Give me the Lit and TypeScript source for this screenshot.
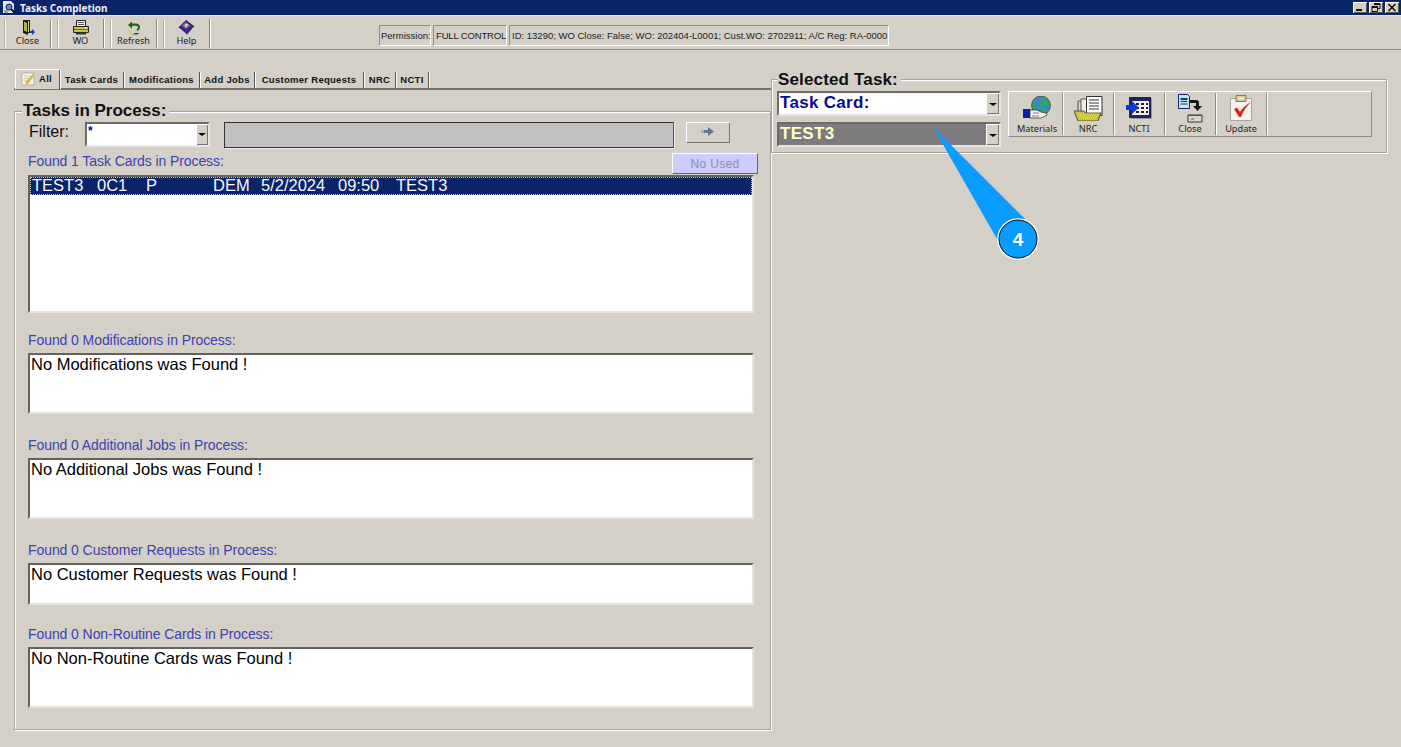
import { LitElement, html, css, svg } from "lit";
import { customElement } from "lit/decorators.js";

const icons: Record<string, unknown> = {
  door: svg`<svg width="18" height="16" viewBox="0 0 18 16"><path d="M4 0h7v13H9v2L4 13z" fill="#1c1c10"/><path d="M5 1.500l3 1.500v9l-3-1.500z" fill="#b5b04a"/><path d="M9 1h1v11H9z" fill="#d8d48a"/><path d="M11 11h2V9l3 3-3 3v-2h-2z" fill="#1f3fb0"/></svg>`,
  printer: svg`<svg width="18" height="15" viewBox="0 0 18 15"><path d="M4.500.5h9v6h-9z" fill="#f4f4ee" stroke="#222"/><path d="M6 2.500h6M6 4.500h6" stroke="#555"/><path d="M1.500 6.500h15v6h-15z" fill="#c9c04a" stroke="#222"/><path d="M2 9.500h14" stroke="#77722a"/><path d="M4 12.500h10v2H4z" fill="#333"/><path d="M13 7.500h2v1h-2z" fill="#fff"/></svg>`,
  refresh: svg`<svg width="14" height="14" viewBox="0 0 14 14"><path d="M1 4l4-3.500V2.500h4c2.500 0 4 1.500 4 3.500S11.500 9.500 10.500 10L9.500 8.500c1-.5 1.500-1.300 1.500-2S10 4.800 9 4.800H5V7.500z" fill="#0f6a18"/><path d="M5.500 13.500H9c1.500 0 3-.6 3.500-1.500H5.500z" fill="#0f6a18"/><path d="M3 7.500c-1 .8-1 3.500 1.500 4.500H7v1.500H4.500C1.500 13 1 9 2 7.500z" fill="#d9c93a"/></svg>`,
  help: svg`<svg width="17" height="15" viewBox="0 0 17 15"><path d="M8 .5l8 6-7 8-8-7z" fill="#3f2480" stroke="#1a1040" stroke-width=".8"/><path d="M8 2l4.500 3.500L8 9 4 5.500z" fill="#8a6cc8"/><path d="M7 4h3v1.500H8.500V7H7z" fill="#f3e24a"/><path d="M1.500 8l7.500 6.500 7-8-.5 2L9 15 1.500 9.500z" fill="#d8d8e8"/></svg>`,
  materials: svg`<svg width="29" height="25" viewBox="0 0 29 25"><circle cx="18" cy="9.500" r="9.500" fill="#2fa56a" stroke="#222" stroke-width=".6"/><path d="M12 3c3-2 6-2 8 0 1 2-1 3-3 3s-1 3 1 4 1 4-2 5c-2-1-3-4-4-6s-2-4 0-6z" fill="#3a86c8"/><path d="M22 10c2-1 4 0 5 1-1 3-3 5-5 6-1-2-1-5 0-7z" fill="#3a86c8"/><path d="M0 13h7v9H0z" fill="#0b1fa8"/><path d="M7 14h7l4 2 5 1 1 2-6 3H7z" fill="#f4f4f0" stroke="#222" stroke-width=".7"/><path d="M10 17h6M9 20h7" stroke="#666" stroke-width=".8"/></svg>`,
  nrc: svg`<svg width="29" height="25" viewBox="0 0 29 25"><path d="M4 5h14v12H4z" fill="#d8d6cc" stroke="#555"/><path d="M7 3h14v15H7z" fill="#eeece4" stroke="#555"/><path d="M12.500.5h15.500v19H12.500z" fill="#fff" stroke="#333"/><path d="M15 4h10M15 7h10M15 10h10M15 13h10" stroke="#333"/><path d="M0 15h10l1 2h16l-3 8H4z" fill="#c7c23a" stroke="#3c3a10" stroke-width=".8"/><path d="M3 18h22M4 20h20M5 22h18" stroke="#e6e37a" stroke-dasharray="1 1"/></svg>`,
  ncti: svg`<svg width="26" height="24" viewBox="0 0 26 24"><path d="M3 1h22v21H3z" fill="#222262"/><path d="M6 5h17v14H6z" fill="#eef0f6"/><path d="M10 7h3v2h-3zM15 7h3v2h-3zM20 7h2v2h-2zM10 11h3v2h-3zM15 11h3v2h-3zM20 11h2v2h-2zM10 15h3v2h-3zM15 15h3v2h-3zM20 15h2v2h-2z" fill="#222"/><path d="M0 9h6V5l7 6.500L6 18v-4H0z" fill="#0a3ad8"/><path d="M25 2h1v21H5v-1h20z" fill="#9a988e"/></svg>`,
  closeTask: svg`<svg width="25" height="29" viewBox="0 0 25 29"><path d="M.5.500h9l2 2v12H.5z" fill="#bfeaf0" stroke="#16206a"/><path d="M2.500 4h7v2h-7zM2.500 7h7v1h-7zM2.500 9.500h7v1h-7z" fill="#16348a"/><path d="M12 6h6c2 0 3 1 3 3v3h3l-4.500 5-4.500-5h3V9h-6z" fill="#151515"/><path d="M10 21h14v7H10z" fill="#d9d6cc" stroke="#333"/><path d="M10 21h14v1H10z" fill="#555"/><path d="M13 24.500h3v1h-3z" fill="#b03030"/></svg>`,
  update: svg`<svg width="22" height="26" viewBox="0 0 22 26"><path d="M.5 3.500h21v22H.5z" fill="#f5f3ee" stroke="#a8a69c"/><path d="M6 .5h10v6H6z" fill="#d8c890" stroke="#8a7a50"/><path d="M8 2.500h6v2H8z" fill="#f3ecd0"/><path d="M4 14l3-1.500 3 4.500c2-4 6-7 11-10-4 4-8 9-10 15H9z" fill="#d9261c"/></svg>`,
  arrow: svg`<svg width="14" height="9" viewBox="0 0 14 9"><path d="M0 3h7V0l6 4.500L7 9V6H0z" fill="#5a7a98"/><path d="M0 3h3v3H0z" fill="#9ab0c4"/></svg>`,
  app: svg`<svg width="13" height="13" viewBox="0 0 13 13"><path d="M0 0h8l3 3v9H0z" fill="#dfe6f0"/><circle cx="6" cy="6" r="3" fill="#5f88c4" stroke="#16243e"/><path d="M8 8l4 4" stroke="#111" stroke-width="2"/><path d="M1 9h4v3H1z" fill="#98a4b8"/></svg>`,
};

const TOP = [
  { icon: "door", label: "Close" },
  { icon: "printer", label: "WO" },
  { icon: "refresh", label: "Refresh" },
  { icon: "help", label: "Help" },
];
const TASK = [
  { icon: "materials", label: "Materials" },
  { icon: "nrc", label: "NRC" },
  { icon: "ncti", label: "NCTI" },
  { icon: "closeTask", label: "Close" },
  { icon: "update", label: "Update" },
];
const TABS = [
  { t: "Task Cards", w: 64 },
  { t: "Modifications", w: 76 },
  { t: "Add Jobs", w: 55 },
  { t: "Customer Requests", w: 109 },
  { t: "NRC", w: 32 },
  { t: "NCTI", w: 33 },
];
const SECTIONS = [
  { label: "Found 0 Modifications in Process:", text: "No Modifications was Found !", h: 61, gap: 40 },
  { label: "Found 0 Additional Jobs in Process:", text: "No Additional Jobs was Found !", h: 61, gap: 44 },
  { label: "Found 0 Customer Requests in Process:", text: "No Customer Requests was Found !", h: 42, gap: 44 },
  { label: "Found 0 Non-Routine Cards in Process:", text: "No Non-Routine Cards was Found !", h: 61, gap: 42 },
];
const COLS = [
  ["TEST3", 65], ["0C1", 49], ["P", 67], ["DEM", 48], ["5/2/2024", 77], ["09:50", 58], ["TEST3", 60],
] as const;

@customElement("app-root")
export class AppRoot extends LitElement {
  static styles = css`
    :host { display: block; position: relative; width: 1401px; height: 747px; overflow: hidden; background: #d4d0c8; font-family: "Liberation Sans", Arial, sans-serif; color: #000; }
    .title { height: 15px; background: #0a246a; display: flex; align-items: center; padding: 0 2px 0 3px; box-sizing: border-box; }
    .title-text { margin-left: 4px; color: #eef0f6; font: bold 10px "Noto Sans", sans-serif; flex: 1; }
    .winbtns { display: flex; gap: 2px; }
    .winbtn { width: 14px; height: 11px; background: #d4d0c8; box-shadow: inset 1px 1px 0 #fff, inset -1px -1px 0 #555; display: flex; align-items: center; justify-content: center; }
    .topbar { height: 35px; box-sizing: border-box; border-top: 1px solid #e8e6e0; border-bottom: 1px solid #8e8b84; padding: 3px 0 0 4px; display: flex; }
    .tb { box-sizing: border-box; width: 47px; height: 29px; border-left: 1px solid #b0ada6; border-right: 1px solid #8a877f; box-shadow: 1px 0 0 #fff, inset 1px 0 0 #fff; margin-right: 6px; display: flex; flex-direction: column; align-items: center; font: 9.200px "Noto Sans", sans-serif; color: #222; line-height: 10px; }
    .tb .ic { height: 17px; display: flex; align-items: center; }
    .info { display: flex; gap: 2px; margin: 6px 0 0 163px; }
    .box { height: 21px; box-sizing: border-box; padding: 0 1px; border: 1px solid; border-color: #8e8b84 #fff #fff #8e8b84; font: 9.500px "Liberation Sans", sans-serif; color: #222; display: flex; align-items: center; white-space: nowrap; }
    .b1 { width: 52px; } .b2 { width: 74px; letter-spacing: -.15px; padding-left: 2px; } .b3 { width: 380px; padding-left: 2px; }
    .main { display: flex; align-items: flex-start; padding-left: 14px; }
    .left { width: 757px; flex: none; }
    .tabs { margin-top: 19px; height: 19px; display: flex; align-items: flex-end; border-bottom: 2px solid #77746d; padding-left: 1px; }
    .tab { box-sizing: border-box; height: 16px; padding-bottom: 1px; display: flex; align-items: center; justify-content: center; font: bold 9.500px "Liberation Sans", sans-serif; letter-spacing: .28px; border-right: 1px solid #555; box-shadow: 1px 0 0 #fff; color: #111; white-space: nowrap; }
    .tab.on { height: 20px; width: 45px; justify-content: flex-start; padding: 0 0 2px 5px; gap: 4px; background: #d4d0c8; border-top: 1px solid #fff; border-left: 1px solid #fff; border-radius: 2px 2px 0 0; margin-bottom: -1px; }
    .group { position: relative; box-sizing: border-box; border: 1px solid #a5a29b; box-shadow: inset 1px 1px 0 #fff, 1px 1px 0 #fff; }
    .legend { position: absolute; background: #d4d0c8; font: bold 17px "Liberation Sans", sans-serif; padding: 0 3px 0 1px; line-height: 18px; color: #111; }
    .procs { margin-top: 21px; height: 619px; padding: 10px 0 0 13px; }
    .procs .legend { left: 7px; top: -10px; }
    .filter { display: flex; height: 26px; align-items: flex-start; }
    .filter-label { width: 56px; margin-left: 1px; margin-top: 1px; font-size: 16px; color: #111; }
    .combo { position: relative; box-sizing: border-box; background: #fff; border: 2px solid; border-color: #6e6b65 #e8e6e0 #e8e6e0 #6e6b65; }
    .f-combo { width: 125px; height: 25px; margin-right: 14px; font: bold 12px "Liberation Sans", sans-serif; color: #0a0a9a; padding-left: 1px; }
    .dd { position: absolute; right: 0; top: 0; bottom: 0; width: 12px; background: #d4d0c8; box-shadow: inset 1px 1px 0 #fff, inset -1px -1px 0 #777; display: flex; align-items: center; justify-content: center; }
    .dd i { width: 0; height: 0; border: 4px solid transparent; border-top: 3px solid #000; border-bottom: 0; }
    .gray { width: 450px; height: 26px; box-sizing: border-box; background: #c2bfc0; border: 1px solid #333; border-right-color: #555; margin-right: 12px; box-shadow: 1px 1px 0 #eeece6; }
    .go { width: 44px; height: 21px; box-sizing: border-box; border: 1px solid; border-color: #fff #77746d #77746d #fff; display: flex; align-items: center; justify-content: center; padding-bottom: 2px; }
    .lab { font-size: 14px; line-height: 16px; color: #3f3fb0; white-space: nowrap; letter-spacing: -.08px; }
    .first { display: flex; justify-content: space-between; align-items: flex-start; height: 27px; width: 730px; }
    .first .lab { margin-top: 5px; }
    .noused { margin-top: 5px; width: 86px; height: 21px; box-sizing: border-box; background: #ccccff; color: #8d8da8; font-size: 12px; letter-spacing: .3px; display: flex; align-items: center; justify-content: center; border: 1px solid; border-color: #fff #66645e #66645e #fff; }
    .sec { display: flex; flex-direction: column; justify-content: flex-end; padding-bottom: 5px; box-sizing: border-box; }
    .list { width: 726px; box-sizing: border-box; background: #fff; border: 2px solid; border-color: #65625c #e6e4de #e6e4de #65625c; font-size: 16.500px; line-height: 18px; color: #000; padding: 0 1px; }
    .sel { height: 18px; margin: 0 -1px; background: #0a246a; color: #f4f6fb; display: flex; line-height: 17px; outline: 1px dotted #c9c9c9; outline-offset: -1px; padding-left: 2px; }
    .sel span { flex: none; }
    .right { width: 616px; flex: none; }
    .selected { margin-top: 29px; height: 74px; padding: 11px 0 0 5px; display: flex; gap: 7px; }
    .selected .legend { left: 5px; top: -9px; letter-spacing: .15px; }
    .combos { display: flex; flex-direction: column; gap: 6px; }
    .big { width: 224px; height: 25px; font: bold 17px/20px "Liberation Sans", sans-serif; letter-spacing: .3px; padding-left: 1px; color: #0a0a9a; }
    .big.dark { background: #7e7b7e; color: #ffffc8; }
    .big .dd { width: 13px; }
    .big .dd i { margin-top: 2px; }
    .tools { width: 364px; height: 46px; box-sizing: border-box; padding: 1px 0 0 3px; display: flex; border: 1px solid; border-color: #fff #8e8b84 #8e8b84 #fff; }
    .tool { box-sizing: border-box; width: 51px; height: 42px; border-right: 1px solid #8e8b84; box-shadow: 1px 0 0 #fff; display: flex; flex-direction: column; align-items: center; font: 9.200px "Noto Sans", sans-serif; color: #222; line-height: 11px; }
    .tool .ic { height: 30px; display: flex; align-items: center; justify-content: center; }
    .callout { position: absolute; left: 925px; top: 120px; pointer-events: none; }
  `;

  private winButtons() {
    return html`<div class="winbtns">
      <div class="winbtn"><svg width="10" height="9" viewBox="0 0 10 9"><path d="M1 6h6v2H1z" fill="#111"/></svg></div>
      <div class="winbtn"><svg width="10" height="9" viewBox="0 0 10 9"><path d="M3 .5h6v5H7M1 3.500h5.500v5H1z" fill="none" stroke="#111"/><path d="M3 1h6M1 4h6" stroke="#111" stroke-width="2"/></svg></div>
      <div class="winbtn"><svg width="10" height="9" viewBox="0 0 10 9"><path d="M1.500 1l7 7M8.500 1l-7 7" stroke="#111" stroke-width="1.600"/></svg></div>
    </div>`;
  }

  render() {
    return html`
      <div class="title">${icons.app}<div class="title-text">Tasks Completion</div>${this.winButtons()}</div>
      <div class="topbar">
        ${TOP.map((b) => html`<div class="tb"><div class="ic">${icons[b.icon]}</div><div>${b.label}</div></div>`)}
        <div class="info">
          <div class="box b1">Permission:</div>
          <div class="box b2">FULL CONTROL</div>
          <div class="box b3">ID: 13290; WO Close: False; WO: 202404-L0001; Cust.WO: 2702911; A/C Reg: RA-0000</div>
        </div>
      </div>
      <div class="main">
        <div class="left">
          <div class="tabs">
            <div class="tab on">
              <svg width="14" height="14" viewBox="0 0 14 14"><path d="M1 1h12v12H1z" fill="#f7f4e6" stroke="#b8b49c"/><path d="M3 4h7M3 6.500h5M3 9h4" stroke="#c9c5a8"/><path d="M11.500 2l2 1.500L7 12l-2.500 1L5 10z" fill="#d8b840"/></svg>
              <span>All</span>
            </div>
            ${TABS.map((t) => html`<div class="tab" style="width:${t.w}px">${t.t}</div>`)}
          </div>
          <div class="group procs">
            <div class="legend">Tasks in Process:</div>
            <div class="filter">
              <div class="filter-label">Filter:</div>
              <div class="combo f-combo">*<div class="dd"><i></i></div></div>
              <div class="gray"></div>
              <div class="go">${icons.arrow}</div>
            </div>
            <div class="first">
              <div class="lab">Found 1 Task Cards in Process:</div>
              <div class="noused">No Used</div>
            </div>
            <div class="list" style="height:138px">
              <div class="sel">${COLS.map(([t, w]) => html`<span style="width:${w}px">${t}</span>`)}</div>
            </div>
            ${SECTIONS.map((s) => html`
              <div class="sec" style="height:${s.gap}px"><div class="lab">${s.label}</div></div>
              <div class="list" style="height:${s.h}px">${s.text}</div>
            `)}
          </div>
        </div>
        <div class="right">
          <div class="group selected">
            <div class="legend">Selected Task:</div>
            <div class="combos">
              <div class="combo big">Task Card:<div class="dd"><i></i></div></div>
              <div class="combo big dark">TEST3<div class="dd"><i></i></div></div>
            </div>
            <div class="tools">
              ${TASK.map((b) => html`<div class="tool"><div class="ic">${icons[b.icon]}</div><div>${b.label}</div></div>`)}
            </div>
          </div>
        </div>
      </div>
      <svg class="callout" width="120" height="145" viewBox="925 120 120 145">
        <path d="M933 127L1025 219L997 239Z" fill="#0a9bff"/>
        <circle cx="1018" cy="239" r="20" fill="#0a9bff" stroke="#fff" stroke-width="1.500"/>
        <circle cx="1018" cy="239" r="19" fill="#0a9bff" stroke="#111" stroke-width="1"/>
        <text x="1018" y="246" text-anchor="middle" fill="#fff" font-family="Liberation Sans, sans-serif" font-weight="700" font-size="19">4</text>
      </svg>
    `;
  }
}
